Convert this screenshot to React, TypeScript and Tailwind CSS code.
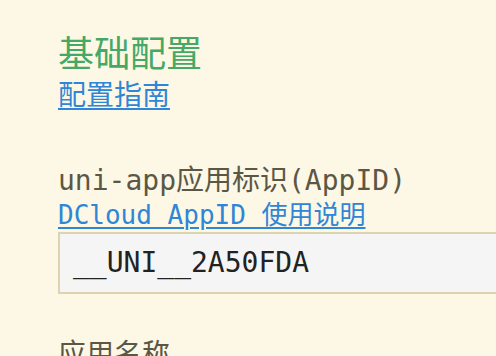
const mono = "font-['DejaVu_Sans_Mono','Noto_Sans_CJK_SC',monospace]";

export default function App() {
  return (
    <div className="h-[356px] w-[496px] overflow-hidden bg-[#fdf8e6] pl-[58px] pt-[28px]">
      <h1 className="font-['Noto_Sans_CJK_SC',sans-serif] text-[36px] leading-[47px] text-[#45a864]">
        基础配置
      </h1>
      <a
        href="#"
        className="block w-fit font-['Noto_Sans_CJK_SC',sans-serif] text-[28px] leading-[36px] text-[#2f86d6] underline decoration-2 underline-offset-[3px]"
      >
        配置指南
      </a>

      <div className={`mt-[52px] ${mono} text-[28px] leading-[36px] text-[#5c5745]`}>
        uni-app应用标识(AppID)
      </div>
      <a
        href="#"
        className={`block w-fit ${mono} text-[26px] leading-[33px] text-[#2f86d6] underline decoration-2 underline-offset-[3px]`}
      >
        DCloud AppID 使用说明
      </a>
      <div className="flex h-[62px] items-center border-2 border-r-0 border-[#ddd3b0] bg-[#f5f5f5] px-[13px]">
        <span className={`${mono} text-[28px] text-[#222]`}>__UNI__2A50FDA</span>
      </div>

      <div className="mt-[40px] font-['Noto_Sans_CJK_SC',sans-serif] text-[28px] leading-[36px] text-[#5c5745]">
        应用名称
      </div>
    </div>
  );
}
